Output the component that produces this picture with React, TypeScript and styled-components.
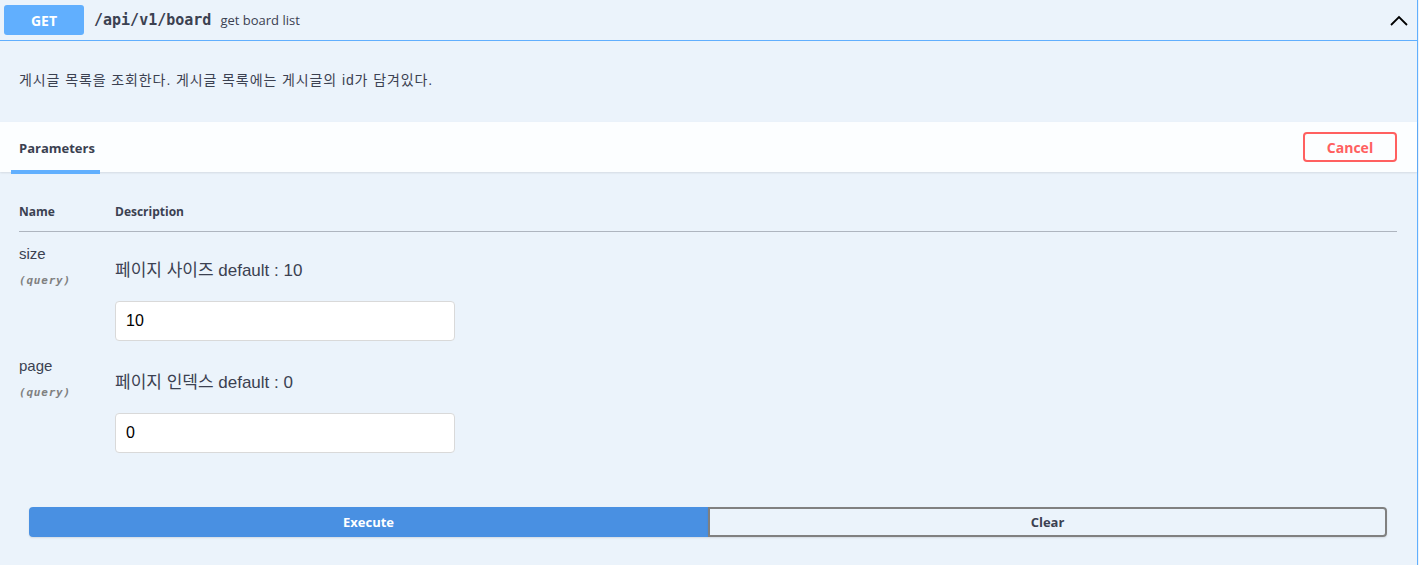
import React from "react";
import styled, { createGlobalStyle } from "styled-components";

const Global = createGlobalStyle`
  html, body { margin: 0; padding: 0; background: #ebf3fb; }
  body { font-family: "Open Sans", "Noto Sans CJK KR", sans-serif; color: #3b4151; }
  * { box-sizing: border-box; }
`;

const KR = `"Liberation Sans", "Noto Sans CJK KR", sans-serif`;

const Block = styled.div`
  width: 1418px;
  min-height: 565px;
  background: #ebf3fb;
  border-right: 1px solid #61affe;
`;

const Summary = styled.div`
  display: flex;
  align-items: center;
  height: 41px;
  padding: 5px 8px 5px 4px;
  border-bottom: 1px solid #61affe;
`;

const Method = styled.span`
  display: inline-flex;
  align-items: center;
  justify-content: center;
  width: 80px;
  height: 30px;
  background: #61affe;
  border-radius: 3px;
  color: #fff;
  font-family: "Open Sans", sans-serif;
  font-weight: 700;
  font-size: 14px;
`;

const Path = styled.span`
  font-family: "DejaVu Sans Mono", "Liberation Mono", monospace;
  font-size: 15px;
  font-weight: 600;
  padding: 0 9px 0 10px;
  color: #3b4151;
`;

const SummaryDesc = styled.span`
  flex: 1;
  font-family: "Open Sans", sans-serif;
  font-size: 13px;
  color: #3b4151;
`;

const Chevron = styled.svg`
  width: 20px;
  height: 20px;
`;

const DescWrap = styled.div`
  height: 81px;
  padding: 28px 19px 0;
  font-family: ${KR};
  font-size: 14px;
  letter-spacing: 0.9px;
  color: #3b4151;
`;

const SectionHeader = styled.div`
  display: flex;
  align-items: center;
  justify-content: space-between;
  height: 50px;
  padding: 0 20px 0 19px;
  background: rgba(255, 255, 255, 0.85);
  box-shadow: 0 1px 2px rgba(0, 0, 0, 0.1);
`;

const Tab = styled.h4`
  position: relative;
  margin: 0;
  font-family: "Open Sans", sans-serif;
  font-size: 13px;
  font-weight: 700;
  color: #3b4151;
  line-height: 20px;
  padding-top: 2px;
  &::after {
    content: "";
    position: absolute;
    left: -8px;
    right: -5px;
    bottom: -16px;
    height: 4px;
    background: #61affe;
  }
`;

const CancelBtn = styled.button`
  width: 94px;
  height: 30px;
  border: 2px solid #ff6060;
  border-radius: 4px;
  background: transparent;
  color: #ff6060;
  font-family: "Open Sans", sans-serif;
  font-weight: 700;
  font-size: 14px;
  padding: 0;
`;

const Params = styled.div`
  padding: 28px 20px 0 19px;
`;

const HeadRow = styled.div`
  display: grid;
  grid-template-columns: 96px 1fr;
  height: 32px;
  border-bottom: 1px solid rgba(59, 65, 81, 0.35);
  font-family: "Open Sans", sans-serif;
  font-size: 12px;
  font-weight: 700;
  color: #3b4151;
`;

const HeadCell = styled.div`
  line-height: 24px;
`;

const Row = styled.div`
  display: grid;
  grid-template-columns: 96px 1fr;
  padding: 11px 0 0;
  height: 112px;
`;

const NameCell = styled.div`
  display: flex;
  flex-direction: column;
`;

const ParamName = styled.div`
  font-family: "Liberation Sans", sans-serif;
  font-size: 15px;
  line-height: 22px;
  color: #3b4151;
`;

const ParamIn = styled.div`
  margin-top: 9px;
  font-family: "DejaVu Sans Mono", monospace;
  font-size: 11px;
  font-style: italic;
  font-weight: 600;
  color: #808080;
  letter-spacing: 0.8px;
`;

const DescCell = styled.div`
  display: flex;
  flex-direction: column;
`;

const ParamDesc = styled.p`
  margin: 17px 0 0;
  font-family: ${KR};
  font-size: 17px;
  line-height: 22px;
  color: #3b4151;
`;

const Input = styled.input`
  margin-top: 19px;
  width: 340px;
  height: 40px;
  padding: 0 10px;
  border: 1px solid #d9d9d9;
  border-radius: 4px;
  background: #fff;
  font-family: "Liberation Sans", sans-serif;
  font-size: 16px;
  color: #000;
  outline: none;
`;

const BtnGroup = styled.div`
  display: flex;
  padding: 51px 30px 0 29px;
`;

const ExecBtn = styled.button<{ $variant: "primary" | "clear" }>`
  flex: 1;
  height: 30px;
  padding: 0;
  font-family: "Open Sans", sans-serif;
  font-weight: 700;
  font-size: 13px;
  border: 2px solid ${(p) => (p.$variant === "primary" ? "#4990e2" : "#808080")};
  background: ${(p) => (p.$variant === "primary" ? "#4990e2" : "transparent")};
  color: ${(p) => (p.$variant === "primary" ? "#fff" : "#3b4151")};
  border-radius: ${(p) => (p.$variant === "primary" ? "4px 0 0 4px" : "0 4px 4px 0")};
  box-shadow: 0 1px 2px rgba(0, 0, 0, 0.1);
`;

const params = [
  { name: "size", desc: "페이지 사이즈 default : 10", value: "10" },
  { name: "page", desc: "페이지 인덱스 default : 0", value: "0" },
];

export default function App() {
  return (
    <>
      <Global />
      <Block>
        <Summary>
          <Method>GET</Method>
          <Path>/api/v1/board</Path>
          <SummaryDesc>get board list</SummaryDesc>
          <Chevron viewBox="0 0 20 20">
            <path d="M2 15 L10 7 L18 15" fill="none" stroke="#000" strokeWidth="1.8" />
          </Chevron>
        </Summary>
        <DescWrap>게시글 목록을 조회한다. 게시글 목록에는 게시글의 id가 담겨있다.</DescWrap>
        <SectionHeader>
          <Tab>Parameters</Tab>
          <CancelBtn>Cancel</CancelBtn>
        </SectionHeader>
        <Params>
          <HeadRow>
            <HeadCell>Name</HeadCell>
            <HeadCell>Description</HeadCell>
          </HeadRow>
          {params.map((p) => (
            <Row key={p.name}>
              <NameCell>
                <ParamName>{p.name}</ParamName>
                <ParamIn>(query)</ParamIn>
              </NameCell>
              <DescCell>
                <ParamDesc>{p.desc}</ParamDesc>
                <Input defaultValue={p.value} />
              </DescCell>
            </Row>
          ))}
        </Params>
        <BtnGroup>
          <ExecBtn $variant="primary">Execute</ExecBtn>
          <ExecBtn $variant="clear">Clear</ExecBtn>
        </BtnGroup>
      </Block>
    </>
  );
}
